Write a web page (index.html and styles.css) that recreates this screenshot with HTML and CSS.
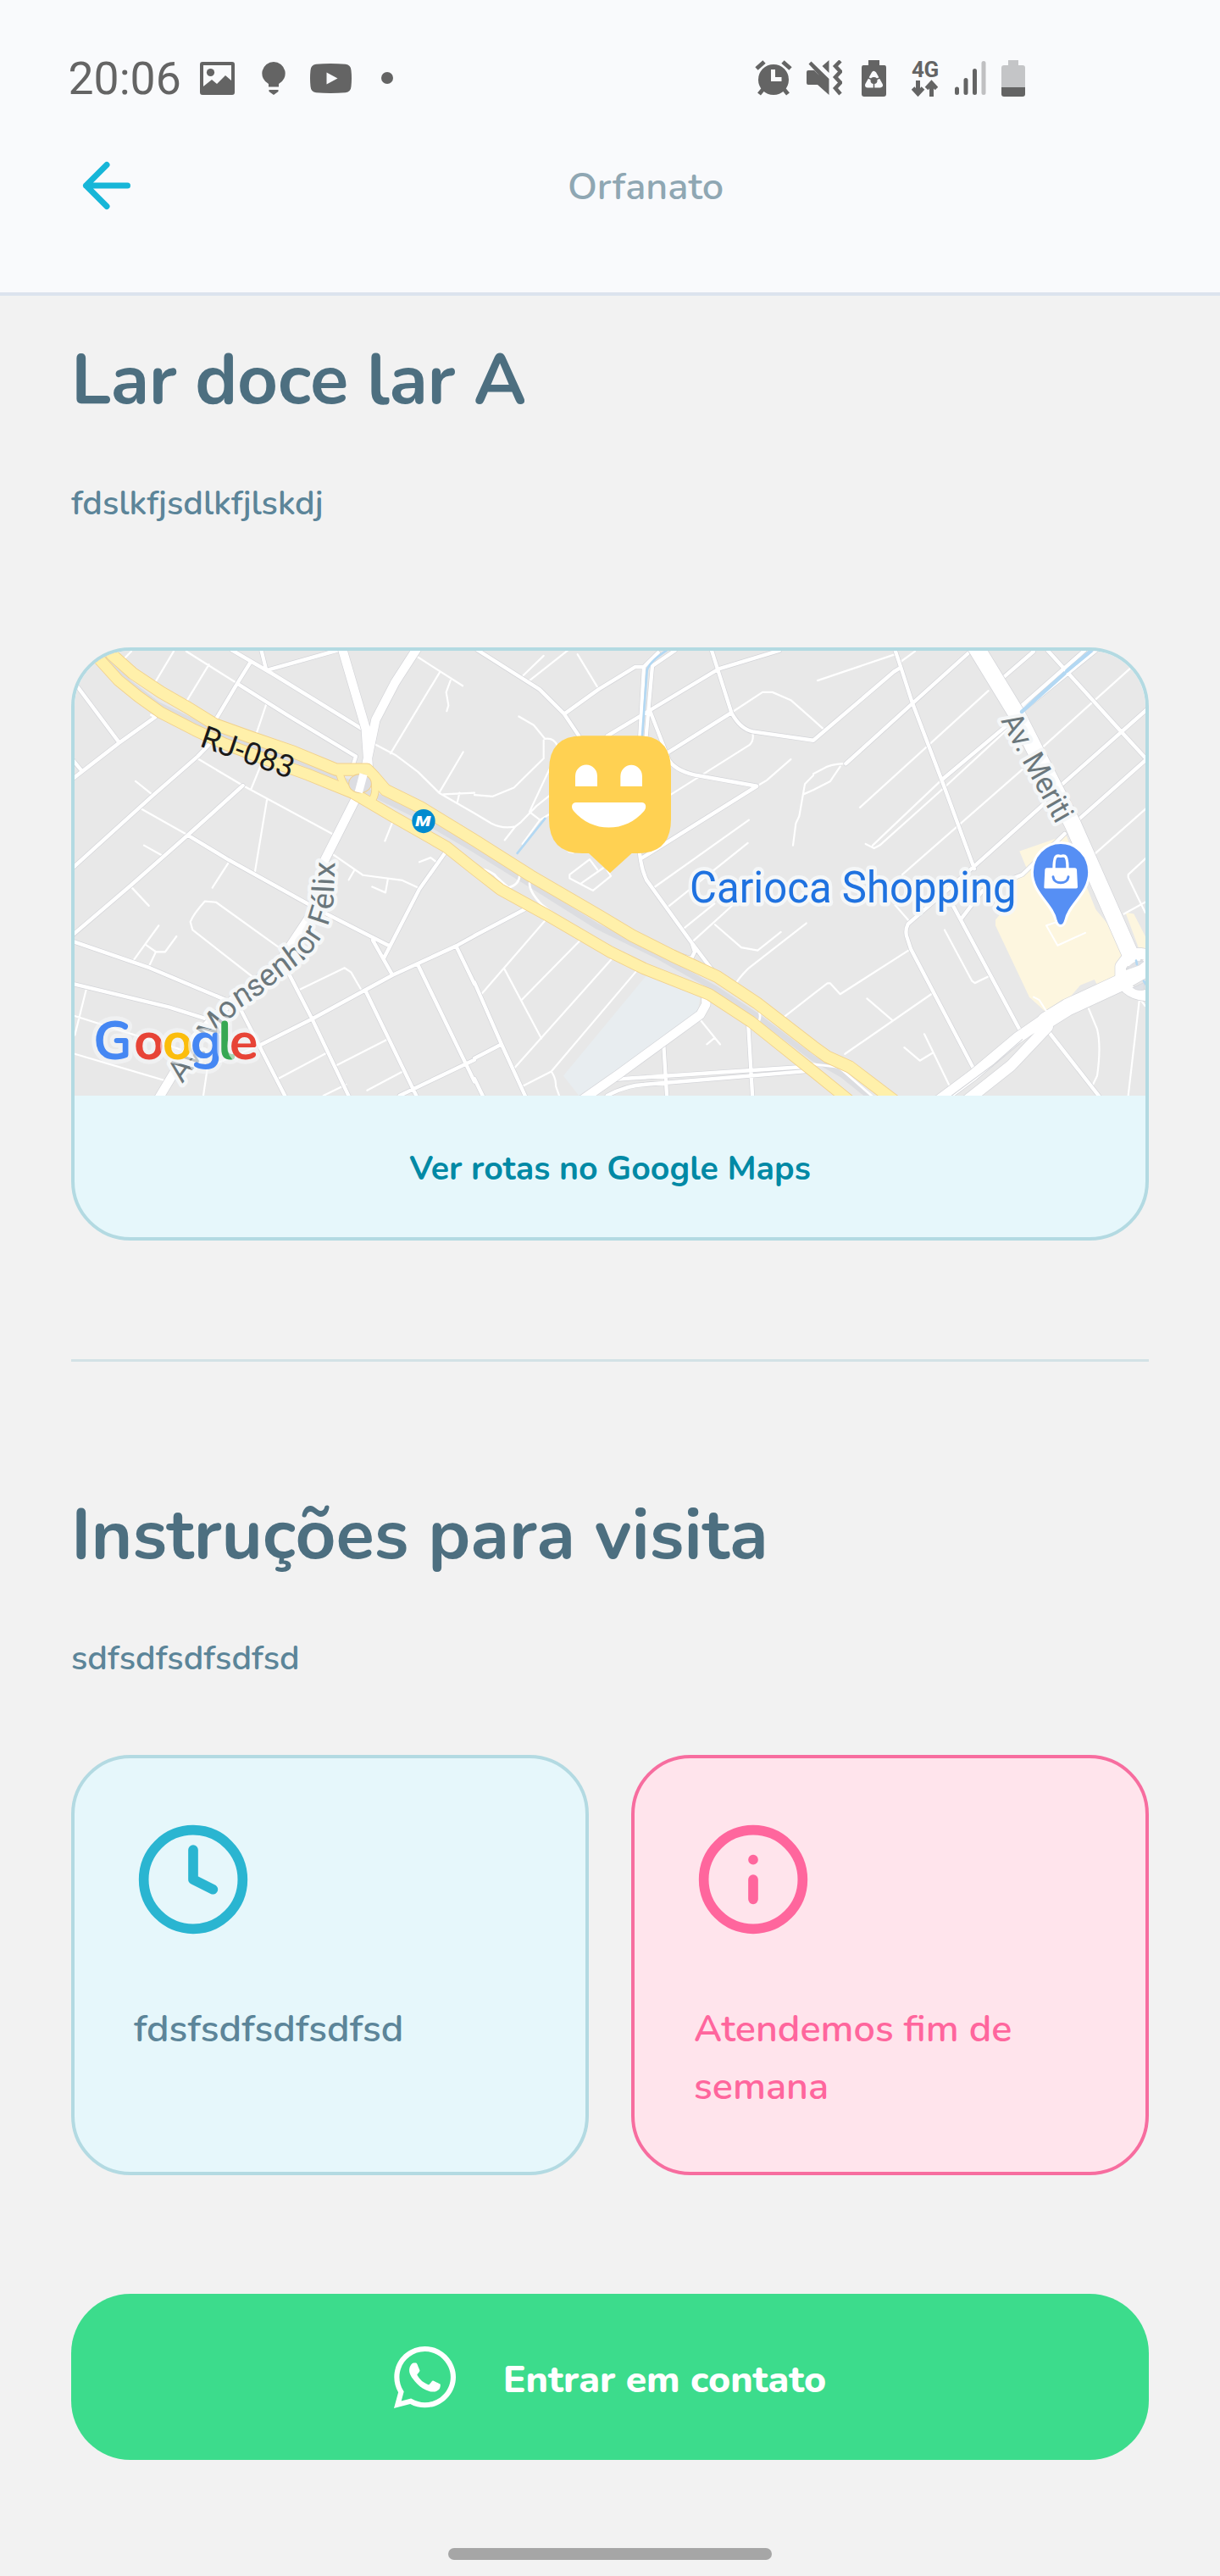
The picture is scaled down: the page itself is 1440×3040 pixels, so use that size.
FILE: index.html
```html
<!DOCTYPE html>
<html lang="pt-BR">
<head>
<meta charset="utf-8">
<title>Orfanato</title>
<link rel="stylesheet" href="styles.css">
</head>
<body>
<header class="header">
  <div class="status">
    <div class="status-left">
      <span class="time">20:06</span>
      <svg class="ic-image" width="41" height="39" viewBox="0 0 41 39"><path fill-rule="evenodd" d="M3 0H38Q41 0 41 3V36Q41 39 38 39H3Q0 39 0 36V3Q0 0 3 0ZM4 4V29L14 21 20 26 30 16 37 22V4Z"/><circle cx="12.5" cy="12.5" r="4.6"/></svg>
      <svg class="ic-bulb" width="28" height="39" viewBox="0 0 28 39"><path d="M14 0A13.7 13.7 0 0 1 20 26V29.500H8V26A13.700 13.700 0 0 1 14 0ZM8.500 33H19.500V35L14 39 8.500 35Z"/></svg>
      <svg class="ic-tube" width="49" height="35" viewBox="0 0 49 35"><path fill-rule="evenodd" d="M7 .8Q24 -.8 42 .8Q48 1.500 48.500 8Q49.500 17 48.500 27Q48 33.500 42 34.200Q24 35.800 7 34.200Q1 33.500 .5 27Q-.5 17 .5 8Q1 1.500 7 .8ZM19.500 10.500V24.500L32.500 17.500Z"/></svg>
      <span class="dot"></span>
    </div>
    <div class="status-right">
      <svg class="ic-alarm" width="44" height="42" viewBox="0 0 44 42"><circle cx="22" cy="23" r="18"/><path class="k" d="M2 10 11 2M42 10 33 2M10 34 5 40M34 34 39 40"/><path class="w" d="M21.500 11V22.500H31.500"/></svg>
      <svg class="ic-mute" width="42" height="42" viewBox="0 0 42 42"><path d="M2 12H9L15 18 2.500 4.500 5.500 1.500 26.500 22V41L13 29H2Q0 29 0 27V14Q0 12 2 12ZM18.500 7 26.500 0V15Z"/><path class="z" d="M40 1 34 7 40 13.500 34 20 40 26.500 34 33 40 40"/></svg>
      <svg class="ic-eco" width="29" height="43" viewBox="0 0 29 43"><path d="M8 0H21V6H27Q29 6 29 9V40Q29 43 26 43H3Q0 43 0 40V9Q0 6 2 6H8Z"/><path class="tri" d="M14.500 16 22 29.500H7Z"/><path class="cut" d="M14.500 22V33M14.500 24 7 20.500M14.500 24 22 20.500"/><circle cx="14.5" cy="24" r="4"/></svg>
      <div class="net"><span>4G</span><svg width="31" height="20" viewBox="0 0 31 20"><path class="k" d="M7.500 1V16M1.500 10 7.500 16.500 13.500 10M23.500 20V4M17.500 10.500 23.500 4 29.500 10.500"/></svg></div>
      <svg class="ic-signal" width="37" height="40" viewBox="0 0 37 40"><path class="k" d="M2.500 33V37.500M13 22.500V37.500M23.500 11.500V37.500"/><path class="k f" d="M34 2.500V37.500"/></svg>
      <svg class="ic-batt" width="28" height="43" viewBox="0 0 28 43"><path fill="#c4c5c7" d="M8 0H20V6H25Q28 6 28 9V33H0V9Q0 6 3 6H8Z"/><path d="M0 32H28V40Q28 43 25 43H3Q0 43 0 40Z"/></svg>
    </div>
  </div>
  <div class="nav">
    <svg class="back" width="84" height="84" viewBox="0 0 24 24"><path d="M19 12H5M12 19 5 12 12 5"/></svg>
    <span class="nav-title">Orfanato</span>
    <span class="nav-side"></span>
  </div>
</header>
<main class="main">
  <h1 class="title t1">Lar doce lar A</h1>
  <p class="desc">fdslkfjsdlkfjlskdj</p>
  <section class="map">
    <svg class="map-view" viewBox="24 23 3792 1525" preserveAspectRatio="none">
      <defs>
        <path id="mid" d="M30 140 180 335M20 460 180 340 310 250M20 400 50 435M20 765 300 520 460 385 500 345M20 995 220 830 425 655 620 485M425 655 570 740 890 912 1140 1035M20 1020 290 1110 560 1220M20 1165 360 1245 540 1300M580 20 730 105 1040 290M600 135 780 245 1020 385 1010 415M520 265 600 135 645 65M685 20 703 90 960 20M1340 710 1245 840 1120 1075M1080 1015 1150 1135M680 1375 865 1285 1150 1135 1375 1035 1450 995M780 1125 865 1285 1000 1560M600 1230 775 1560M1055 1190 1240 1560M1240 1100 1410 1440 1440 1500M1375 1035 1440 1165M1175 1548 1440 1425
        M1450 20 1670 155 1758 240 1810 315M1758 240 1880 155 2010 78 2040 78 2090 30M2040 78 2026 315M2070 75 2048 315M2070 75 2150 22M1910 315 2305 85 2520 22M2280 22 2350 235Q2380 290 2425 300L2640 330M2120 375 2350 235M2062 230 2130 400Q2160 440 2240 452L2440 487 2030 735M2025 715Q2030 770 2050 810L2210 1025 2300 1140M2210 1025 2220 1055 2208 1078 2160 1065M1440 1000 1620 908M1440 1160 1535 1370 1625 1560M1440 1420 1535 1372M1440 1490 1475 1560M2110 1375 2122 1560M2410 1310 2425 1560M1940 1492 2000 1488 2640 1447M1910 1548Q1980 1512 2040 1510L2640 1462
        M2640 330 2925 95 2950 80M2930 22 2950 80 2990 200 3100 480 3210 770M3190 30 2995 200 2755 410M3420 25 3300 125M3640 22 3370 235M3600 22 3350 235M3330 275 3095 465M3470 22 3730 300 3820 395M3820 225 3510 490M3820 395 3575 605M3460 545 3200 770 2975 960Q2965 980 2970 1000L2985 1045 3210 1460M3120 870 3375 1330M3165 940 3240 845 3380 790 3530 650M3470 1325 3660 1560"/>
        <path id="minor" d="M200 50 225 25M310 130 375 25M415 205 500 70M420 25 600 135M240 470 298 515M455 390 620 485 935 650M705 200 665 315M690 400 650 495M705 535 662 785M260 565 425 655M270 690 335 725M572 745 512 835M225 833 287 897M755 1045 525 885 485 882Q445 925 434 952L442 980 660 1145M322 965 232 1085M275 1030 312 1055 345 1055 385 1002M312 1055 285 1110M65 1185 25 1340M25 1275 400 1390M25 1405 340 1495M480 1548 495 1450 680 1375M930 715 1045 792 1185 810 1245 837M1015 775 995 808M1078 832 1125 852 1133 808M1245 747 1285 732 1305 747M1150 610 1123 675M1090 345 1160 380 1240 438 1315 510 1440 580M1240 45 1398 143M1318 95 1143 375M1355 125 1340 165 1348 210 1342 230M1400 370 1315 510M1330 515 1440 510M1387 510 1380 540M820 1185 980 1110 1003 1125 1042 1190M745 1490 920 1400M950 1445 1128 1357M905 1548 985 1510M1060 1530 1190 1463
        M1610 110 1685 40M1635 125 1770 22M1805 35 1880 155M1597 248 1650 278 1690 325Q1720 320 1735 350M1685 330V392L1580 492 1505 522 1440 517M1705 430 1635 575M1440 580 1500 615Q1540 635 1585 625L1605 610 1660 555 1705 520M1635 575 1672 603 1702 585M1672 603 1610 685M1585 625 1547 672M1750 685 1775 712 1790 715M1848 738 1777 790V803L1860 845 1923 795 1910 775M1848 738 1875 773M1815 822 1895 768M1688 950 1460 1205M1815 1015 1605 1222M1545 1112 1677 1352M1930 1075 1580 1455M2017 1117 1712 1465 1608 1517M1712 1465Q1730 1490 1728 1515L1740 1548M2350 235 2460 165H2495L2560 192 2640 260M2425 305Q2430 330 2415 345L2137 515M2560 395 2475 467 2440 487M2640 450 2610 480 2590 590 2578 615 2568 690M2605 515 2640 500M2412 603 2075 835M2408 682 2120 905M2290 890 2175 980M2360 890 2210 1022M2292 962 2385 1040 2443 1050 2525 987M2615 957 2410 1112Q2370 1150 2360 1175M2640 1200 2525 1287M2233 1280 2310 1372M2290 1350 2263 1372
        M2655 125 2930 35M2950 60 3000 25M2640 260 2680 295M3260 160 2805 560M3380 430 2955 790M3760 85 3450 355M3820 562 3630 725M3820 732 3755 790V800L3815 920M3740 925 3815 885M2930 895 2980 950M3105 980 3202 1155 3212 1162 3265 1137M2985 1045 2735 1200 2700 1163 2690 1163 2640 1200M3065 1195 2752 1405M2830 1215 2920 1290M3033 1337 3120 1510M2962 1383 3017 1428 3065 1400M3615 1250 3645 1320Q3660 1380 3645 1480L3630 1510M3795 1215 3755 1548M3795 1215 3815 1240M2755 410Q2700 410 2670 430L2640 445M2735 420 2700 470 2640 500M3095 465 2850 690M3330 290 3100 495 2875 690 2855 700 2825 685"/>
        <path id="major" d="M970 10 1055 290 1065 430M1240 10 1160 130 1090 260 1060 400 1040 490M1025 520 910 740 880 900 750 1090 560 1240 450 1350 320 1560M1810 1570 1950 1475 2240 1270 2260 1235V1200"/>
        <path id="avenue" d="M3215 10 3360 240 3560 620 3770 1080M3830 1105 3730 1160 3540 1245 3462 1292"/>
        <path id="ring" d="M3460 1285 3360 1352 3205 1478 3070 1575M3170 1575 3340 1445 3470 1312M3765 1065Q3790 1055 3830 1068M3755 1070 3728 1105V1150M3750 1180Q3780 1205 3830 1205"/>
        <path id="up" d="M130 0 155 35 230 100 330 165 420 215 520 275 650 320 800 370 950 430H1060L1085 455 1125 500 1250 560 1440 672 1640 795 1880 930 2000 1000 2140 1068 2300 1140 2440 1230 2640 1380 2690 1415 2770 1450 2940 1575"/>
        <path id="low" d="M80 10 110 50 180 125 250 180 330 235 450 295 550 340 700 395 850 447 1010 510 1150 590 1340 695 1440 772 1530 840 1690 925 1920 1055 2040 1112 2270 1200 2420 1295 2640 1465 2780 1575"/>
        <path id="felix" d="M405 1508 545 1325 605 1250Q670 1215 740 1155L840 1080Q890 1025 915 975 942 920 942 850L948 700"/>
      </defs>
      <rect width="3840" height="1560" fill="#e8e8e8"/>
      <path fill="#e8edf0" d="M2050 1135 2240 1205 2230 1265 2100 1365 1810 1548 1755 1480Z"/>
      <path fill="#fdf6df" d="M3370 710 3535 655 3640 910 3700 980 3740 1075 3715 1105V1135L3645 1168 3635 1150 3585 1170 3545 1215 3460 1258 3405 1210 3285 965V945L3350 870 3355 810 3400 780ZM3745 920 3775 925 3820 1010V1055L3795 1050Z"/>
      <g class="roads">
        <use href="#minor" stroke="#fff" stroke-width="6.500"/>
        <use href="#mid" stroke="#d3d4d8" stroke-width="17"/>
        <use href="#mid" stroke="#fff" stroke-width="13"/>
        <use href="#major" stroke="#d3d4d8" stroke-width="35"/>
        <use href="#avenue" stroke="#d3d4d8" stroke-width="62"/>
        <use href="#ring" stroke="#d3d4d8" stroke-width="42"/>
        <use href="#major" stroke="#fff" stroke-width="31"/>
        <use href="#avenue" stroke="#fff" stroke-width="58"/>
        <use href="#ring" stroke="#fff" stroke-width="38"/>
        <path stroke="#d3d4d8" stroke-width="3" d="M3130 1548 3280 1440 3380 1355"/>
        <path fill="#e0e2e6" stroke="#d3d4d8" stroke-width="2" d="M3750 1115Q3775 1080 3810 1088L3795 1100ZM3772 1178 3812 1160V1185Q3785 1190 3772 1178Z"/>
        <path stroke="#fff" stroke-width="6" d="M3420 1210 3440 1220 3465 1258M3510 950 3465 965 3505 1033 3603 990"/>
        <path stroke="#b3d8f3" stroke-width="8" d="M2120 22Q2060 60 2051 90L2034 315M1690 598 1592 717M3783 1085 3786 1098M3810 1155 3820 1170"/>
        <path stroke="#b3d8f3" stroke-width="13" d="M3625 22 3538 92M3530 100 3378 232"/>
        <path stroke="#dcdde0" stroke-width="20" d="M130 45 220 135 320 208 540 310 800 395 1010 480 1220 580 1440 705 1640 825 1870 965 2090 1070 2300 1185 2440 1275 2640 1420 2740 1475 2850 1560"/>
        <path stroke="#fff" stroke-width="8" d="M1455 770Q1500 775 1520 800L1560 835Q1600 825 1600 790M1635 820Q1635 850 1680 895L1740 940M2450 1265Q2455 1290 2440 1297M2640 1440 2730 1450 2860 1560"/>
        <path stroke="#fff" stroke-width="8" d="M355 167 375 170 405 193M295 243 310 250"/>
        <use href="#up" stroke="#f1d08c" stroke-width="44"/>
        <use href="#low" stroke="#f1d08c" stroke-width="42"/>
        <path stroke="#f1d08c" stroke-width="28" d="M960 435Q975 495 1010 510M1075 440Q1100 500 1080 530"/>
        <use href="#up" stroke="#fff0aa" stroke-width="39"/>
        <use href="#low" stroke="#fff0aa" stroke-width="37"/>
        <path stroke="#fff0aa" stroke-width="23" d="M960 435Q975 495 1010 510M1075 440Q1100 500 1080 530"/>
        <ellipse cx="1035" cy="478" rx="40" ry="32" fill="#dcdde2" stroke="#f1d08c" stroke-width="3"/>
        <path stroke="#fff" stroke-width="28" stroke-linecap="butt" d="M1047 446 1030 508"/>
      </g>
      <circle cx="1260" cy="607" r="41" fill="#008bcf"/>
      <text class="metro" x="1231" y="625" textLength="54" lengthAdjust="spacingAndGlyphs">M</text>
      <text class="route" transform="translate(464 349) rotate(19.300)" textLength="342" lengthAdjust="spacingAndGlyphs">RJ-083</text>
      <text class="street"><textPath href="#felix" textLength="978" lengthAdjust="spacingAndGlyphs">Av. Monsenhor Félix</textPath></text>
      <text class="street" transform="translate(3303 262) rotate(61)" textLength="408" lengthAdjust="spacingAndGlyphs">Av. Meriti</text>
      <text class="place" x="2202" y="887" textLength="1157" lengthAdjust="spacingAndGlyphs">Carioca Shopping</text>
      <g class="poi">
        <path fill="#568ff4" stroke="#fff" stroke-width="9" d="M3516 681A101 101 0 0 1 3617 782C3617 855 3545 890 3533 948Q3528 966 3516 966T3499 948C3487 890 3415 855 3415 782A101 101 0 0 1 3516 681Z"/>
        <path fill="none" stroke="#fff" stroke-width="10" d="M3492 770C3492 715 3505 727 3516 727S3540 715 3540 770"/>
        <path fill="#fff" d="M3466 767H3566Q3572 767 3573 773L3576 833Q3576 838 3571 838H3461Q3456 838 3457 833L3460 773Q3461 767 3466 767Z"/>
        <path fill="none" stroke="#568ff4" stroke-width="9" stroke-linecap="round" d="M3489 798C3492 825 3540 825 3543 798"/>
      </g>
      <text class="google" y="1424"><tspan x="90" fill="#4587f3">G</tspan><tspan x="234" fill="#e74437">o</tspan><tspan x="335" fill="#fbbd0c">o</tspan><tspan x="434" fill="#4587f3">g</tspan><tspan x="532" fill="#36a853">l</tspan><tspan x="572" fill="#e74437">e</tspan></text>
      <g>
        <path fill="#ffd152" d="M1822 314H2018Q2136 314 2136 432V600Q2136 717 2018 717H1997L1920 785 1845 717H1822Q1704 717 1704 600V432Q1704 314 1822 314Z"/>
        <path fill="#fff" d="M1797 488V453A39 39 0 0 1 1875 453V488ZM1957 488V453A38.500 38.500 0 0 1 2034 453V488ZM1800 543H2032C2048 543 2051 560 2041 572C1975 648 1857 648 1791 572C1781 560 1784 543 1800 543Z"/>
      </g>
    </svg>
    <a class="routes">Ver rotas no Google Maps</a>
  </section>
  <hr class="divider">
  <h2 class="title">Instruções para visita</h2>
  <p class="desc">sdfsdfsdfsdfsd</p>
  <section class="cards">
    <article class="card blue">
      <svg width="140" height="140" viewBox="0 0 24 24"><circle cx="12" cy="12" r="10"/><path d="M12 6V12L16 14"/></svg>
      <p>fdsfsdfsdfsdfsd</p>
    </article>
    <article class="card pink">
      <svg width="140" height="140" viewBox="0 0 24 24"><circle cx="12" cy="12" r="10"/><path d="M12 16V12M12 8V8"/></svg>
      <p>Atendemos fim de<br>semana</p>
    </article>
  </section>
  <button class="contact">
    <svg width="73" height="73" viewBox="0 32 448 448"><path fill="#fff" d="M380.900 97.100C339 55.100 283.200 32 223.900 32c-122.400 0-222 99.600-222 222 0 39.100 10.200 77.300 29.600 111L0 480l117.700-30.900c32.400 17.700 68.900 27 106.100 27h.1c122.300 0 224.100-99.600 224.100-222 0-59.300-25.200-115-67.100-157zm-157 341.600c-33.200 0-65.700-8.900-94-25.700l-6.700-4-69.800 18.300L72 359.200l-4.400-7c-18.500-29.400-28.200-63.300-28.200-98.200 0-101.700 82.800-184.500 184.600-184.500 49.300 0 95.600 19.200 130.400 54.100 34.800 34.900 56.200 81.200 56.100 130.500 0 101.800-84.900 184.600-186.600 184.600zm101.200-138.200c-5.500-2.800-32.800-16.200-37.900-18-5.100-1.900-8.800-2.800-12.500 2.800-3.700 5.600-14.300 18-17.600 21.800-3.200 3.700-6.500 4.200-12 1.400-32.600-16.300-54-29.100-75.500-66-5.700-9.800 5.700-9.100 16.300-30.300 1.800-3.700.9-6.900-.5-9.700-1.400-2.800-12.500-30.100-17.100-41.200-4.500-10.800-9.100-9.300-12.500-9.500-3.200-.2-6.900-.2-10.600-.2-3.700 0-9.700 1.400-14.800 6.900-5.100 5.600-19.400 19-19.400 46.300 0 27.300 19.900 53.700 22.600 57.400 2.800 3.700 39.100 59.700 94.800 83.800 35.200 15.200 49 16.500 66.600 13.900 10.700-1.600 32.800-13.400 37.400-26.400 4.600-13 4.600-24.100 3.200-26.400-1.300-2.500-5-3.900-10.500-6.600z"/></svg>
    <span>Entrar em contato</span>
  </button>
  <div class="home"></div>
</main>
</body>
</html>
```
FILE: styles.css
```css
* { box-sizing: border-box; margin: 0; padding: 0; }
body { width: 1440px; height: 3040px; background: #f2f2f2; font-family: Nunito, Lato, sans-serif; overflow: hidden; }
svg { display: block; flex: none; }

.header { height: 349px; background: #f9fafc; border-bottom: 4px solid #dce3ee; }
.status { display: flex; justify-content: space-between; height: 177px; padding: 68px 230px 0 80.5px; color: #646464; font-family: Roboto, sans-serif; }
.status svg { fill: #646464; }
.status-left, .status-right { display: flex; align-items: center; height: 48px; }
.time { width: 155.5px; font-size: 53.5px; line-height: 48px; padding-top: 2px; }
.ic-bulb { margin-left: 32px; }
.ic-tube { margin-left: 29px; }
.dot { width: 14px; height: 14px; margin-left: 35px; border-radius: 50%; background: #646464; }
.ic-mute { margin-left: 17px; }
.ic-eco { margin-left: 23px; }
.net { width: 31px; margin: 1px 0 0 30px; }
.net span { display: block; height: 23px; font: 700 26px/22px Roboto, sans-serif; letter-spacing: -0.5px; }
.ic-signal { margin-left: 20px; }
.ic-batt { margin-left: 18px; }
.k { fill: none; stroke: #646464; stroke-width: 5; }
.ic-signal .k { stroke-linecap: round; }
.ic-signal .f { stroke: #c0c0c2; }
.w { fill: none; stroke: #f9fafc; stroke-width: 5; }
.z { fill: none; stroke: #646464; stroke-width: 4.5; }
.tri { fill: none; stroke: #f9fafc; stroke-width: 6; stroke-linejoin: round; }
.cut { fill: none; stroke: #646464; stroke-width: 1.5; }

.nav { display: flex; align-items: center; justify-content: space-between; height: 84px; padding: 0 84px; }
.back { fill: none; stroke: #17b6d8; stroke-width: 2; stroke-linecap: round; stroke-linejoin: round; }
.nav-title { font-size: 45px; line-height: 60px; font-weight: 600; color: #8fa7b3; padding-top: 3px; }
.nav-side { width: 0; }

.main { padding: 42.5px 84px 0; }
.title { font-size: 83.5px; line-height: 114px; font-weight: 700; color: #4d6f80; }
.t1 { letter-spacing: -0.4px; }
.desc { margin-top: 58px; font-size: 40px; line-height: 60px; font-weight: 600; color: #5c8599; }
.map { height: 700px; margin-top: 140.5px; border: 4px solid #b3dae2; border-radius: 70px; background: #e6f7fb; overflow: hidden; }
.map-view { width: 100%; height: 525px; font-family: Roboto, sans-serif; }
.roads { fill: none; stroke-linejoin: round; stroke-linecap: round; }
.street, .place, .google { paint-order: stroke; stroke: #f5f7f8; stroke-width: 26px; stroke-linejoin: round; }
.street { font-size: 107px; fill: #6b777c; }
.route { font-size: 107px; fill: #1a1a1a; }
.place { font-size: 152px; fill: #1f72e0; }
.metro { font: italic 900 50px Roboto, sans-serif; fill: #fff; }
.google { font: 700 187px Nunito, Lato, sans-serif; stroke-width: 30px; stroke-opacity: .6; }
.routes { display: flex; align-items: center; justify-content: center; height: 167px; padding-top: 5px; font-size: 39.3px; font-weight: 700; color: #0089a5; }
.divider { height: 3px; margin: 140px 0 147.5px; border: 0; background: #d3e2e6; }
.cards { display: grid; grid-template-columns: 611px 611px; gap: 50px; margin-top: 84.5px; }
.card { height: 496px; padding: 73px 70px 0; border: 4px solid; border-radius: 70px; }
.card svg { fill: none; stroke-width: 2; stroke-linecap: round; stroke-linejoin: round; }
.card p { margin-top: 73px; font-size: 45px; line-height: 68px; font-weight: 600; }
.blue { background: #e6f7fb; border-color: #b3dae2; color: #5c8599; }
.blue svg { stroke: #2ab5d1; }
.pink { background: #ffe4ec; border-color: #f76d9f; color: #ff669d; }
.pink svg { stroke: #ff669d; }
.contact { display: flex; align-items: center; justify-content: center; gap: 56px; width: 100%; height: 196px; margin-top: 140px; border: 0; border-radius: 70px; background: #3cdc8c; color: #fff; font: 800 44.5px Nunito, Lato, sans-serif; }
.contact span { padding-top: 6px; }
.home { width: 382px; height: 14px; margin: 104px auto 0; border-radius: 7px; background: #a6a6a6; }
```
